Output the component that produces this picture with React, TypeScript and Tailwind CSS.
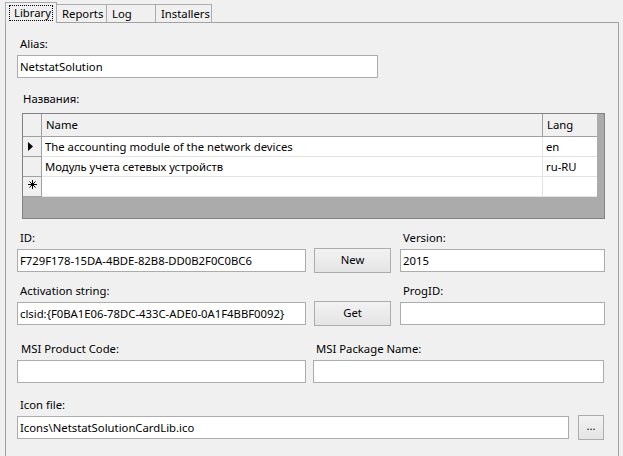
import React from "react";

function Label({ children, className = "" }: { children: React.ReactNode; className?: string }) {
  return <div className={"h-[16px] leading-[16px] pl-[3px] " + className}>{children}</div>;
}

function Input({ value = "", className = "" }: { value?: string; className?: string }) {
  return (
    <div className={"h-[23px] bg-white border border-[#acacac] pl-[2px] leading-[21px] whitespace-nowrap overflow-hidden " + className}>
      {value}
    </div>
  );
}

function Button({ children, className = "" }: { children: React.ReactNode; className?: string }) {
  return (
    <div className={"h-[25px] flex items-center justify-center border border-[#acacac] bg-gradient-to-b from-[#f2f2f2] to-[#e4e4e4] " + className}>
      {children}
    </div>
  );
}

function Tab({ label, w, selected = false }: { label: string; w: string; selected?: boolean }) {
  if (selected) {
    return (
      <div className={"relative z-10 h-[21px] -mb-[1px] border border-b-0 border-[#acacac] bg-[#f0f0f0] flex items-start px-[3px] pt-[2px] " + w}>
        <div className="border border-dotted border-black h-[16px] leading-[14px] px-[4px] w-full">{label}</div>
      </div>
    );
  }
  return (
    <div className={"h-[18px] border border-b-0 border-l-0 border-[#acacac] bg-[#f0f0f0] leading-[17px] pl-[5px] " + w}>{label}</div>
  );
}

export default function App() {
  return (
    <div className="w-[623px] h-[456px] bg-[#f0f0f0] overflow-hidden pt-[2px] pl-[5px] text-[11.3px] text-black font-['Noto_Sans','DejaVu_Sans',sans-serif]">
      <div className="flex items-end h-[20px]">
        <Tab label="Library" w="w-[52px]" selected />
        <Tab label="Reports" w="w-[50px]" />
        <Tab label="Log" w="w-[49px]" />
        <Tab label="Installers" w="w-[56px]" />
      </div>
      <div className="w-[614px] h-[500px] border border-[#a0a0a0] pl-[11px]">
        {/* Alias */}
        <Label className="mt-[13px]">Alias:</Label>
        <Input className="mt-[3px] w-[361px]" value="NetstatSolution" />

        {/* Names grid */}
        <Label className="mt-[13px] pl-[6px]">Названия:</Label>
        <div className="mt-[6px] ml-[5px] w-[583px] h-[106px] border border-[#828282] bg-[#ababab] flex flex-col">
          <div className="flex h-[23px] w-[574px]">
            <div className="w-[19px] bg-[#f0f0f0] border-r border-b border-[#a0a0a0]" />
            <div className="w-[501px] bg-[#f0f0f0] border-r border-b border-[#a0a0a0] pl-[4px] leading-[22px]">Name</div>
            <div className="w-[54px] bg-[#f0f0f0] border-b border-[#a0a0a0] pl-[4px] leading-[22px]">Lang</div>
          </div>
          {[
            { n: "The accounting module of the network devices", l: "en", mark: "arrow" },
            { n: "Модуль учета сетевых устройств", l: "ru-RU", mark: "" },
            { n: "", l: "", mark: "star" },
          ].map((r, i) => (
            <div key={i} className="flex h-[20px] w-[574px]">
              <div className="w-[19px] bg-[#f0f0f0] border-r border-b border-[#a0a0a0] flex items-center pl-[5px]">
                {r.mark === "arrow" && (
                  <svg width="5" height="9" viewBox="0 0 5 9">
                    <path d="M0 0 L5 4.5 L0 9 Z" fill="#000" />
                  </svg>
                )}
                {r.mark === "star" && (
                  <svg width="9" height="9" viewBox="0 0 9 9" className="-mt-[4px]">
                    <path d="M4.5 0 V9 M0 4.5 H9 M1.5 1.5 L7.5 7.5 M7.5 1.5 L1.5 7.5" stroke="#000" strokeWidth="1" />
                  </svg>
                )}
              </div>
              <div className="w-[501px] bg-white border-r border-b border-[#e3e3e3] pl-[3px] leading-[19px] whitespace-nowrap">{r.n}</div>
              <div className="w-[54px] bg-white border-b border-[#e3e3e3] pl-[3px] leading-[19px]">{r.l}</div>
            </div>
          ))}
        </div>

        {/* ID / Version */}
        <div className="flex mt-[11px]">
          <div className="w-[289px]">
            <Label>ID:</Label>
            <Input className="mt-[3px]" value="F729F178-15DA-4BDE-82B8-DD0B2F0C0BC6" />
          </div>
          <div className="ml-[8px] w-[77px] flex flex-col justify-end">
            <Button className="-mb-[1px]">New</Button>
          </div>
          <div className="ml-[9px] w-[205px]">
            <Label>Version:</Label>
            <Input className="mt-[3px]" value="2015" />
          </div>
        </div>

        {/* Activation / ProgID */}
        <div className="flex mt-[11px]">
          <div className="w-[289px]">
            <Label>Activation string:</Label>
            <Input className="mt-[3px]" value="clsid:{F0BA1E06-78DC-433C-ADE0-0A1F4BBF0092}" />
          </div>
          <div className="ml-[8px] w-[77px] flex flex-col justify-end">
            <Button className="-mb-[1px]">Get</Button>
          </div>
          <div className="ml-[9px] w-[205px]">
            <Label>ProgID:</Label>
            <Input className="mt-[3px]" />
          </div>
        </div>

        {/* MSI */}
        <div className="flex mt-[16px]">
          <div className="w-[289px]">
            <Label className="pl-[4px]">MSI Product Code:</Label>
            <Input className="mt-[3px]" />
          </div>
          <div className="ml-[7px] w-[291px]">
            <Label className="pl-[3px]">MSI Package Name:</Label>
            <Input className="mt-[3px]" />
          </div>
        </div>

        {/* Icon file */}
        <Label className="mt-[14px] pl-[2px]">Icon file:</Label>
        <div className="flex mt-[2px] items-center">
          <Input className="w-[552px]" value="Icons\NetstatSolutionCardLib.ico" />
          <Button className="ml-[9px] w-[26px] leading-[10px] pb-[4px]">...</Button>
        </div>
      </div>
    </div>
  );
}
